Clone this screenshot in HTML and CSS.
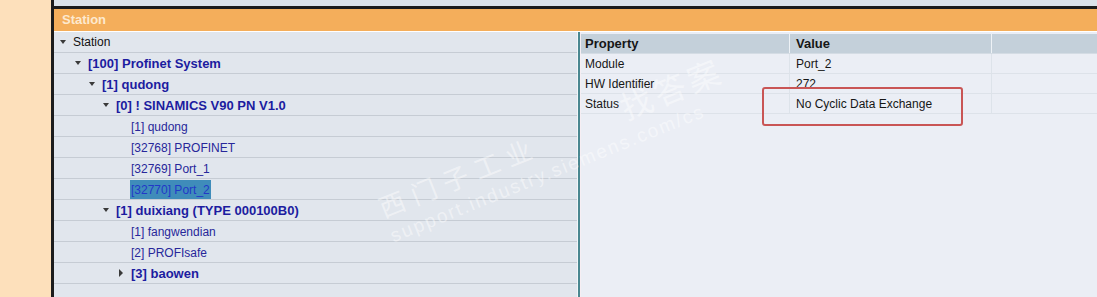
FILE: index.html
```html
<!DOCTYPE html>
<html>
<head>
    <title>Station</title>
    <link rel="stylesheet" href="styles.css">
</head>
<body>
    <div class="page">
        <div class="side"></div>
        <div class="main">
            <div class="topstrip"></div>
            <div class="title">Station</div>
            <div class="content">
                <div class="tree">
                    <div class="row lvl0"><span class="arrow down"></span><span class="plain">Station</span></div>
                    <div class="row lvl1"><span class="arrow down"></span><b>[100] Profinet System</b></div>
                    <div class="row lvl2"><span class="arrow down"></span><b>[1] qudong</b></div>
                    <div class="row lvl3"><span class="arrow down"></span><b>[0] ! SINAMICS V90 PN V1.0</b></div>
                    <div class="row lvl4"><span class="item">[1] qudong</span></div>
                    <div class="row lvl4"><span class="item">[32768] PROFINET</span></div>
                    <div class="row lvl4"><span class="item">[32769] Port_1</span></div>
                    <div class="row lvl4"><span class="item selected">[32770] Port_2</span></div>
                    <div class="row lvl3"><span class="arrow down"></span><b>[1] duixiang (TYPE 000100B0)</b></div>
                    <div class="row lvl4"><span class="item">[1] fangwendian</span></div>
                    <div class="row lvl4"><span class="item">[2] PROFIsafe</span></div>
                    <div class="row lvl4 closed"><span class="arrow right"></span><b>[3] baowen</b></div>
                </div>
                <div class="splitter"></div>
                <div class="props">
                    <div class="prow head"><div class="c1">Property</div><div class="c2">Value</div><div class="c3"></div></div>
                    <div class="prow"><div class="c1">Module</div><div class="c2">Port_2</div><div class="c3"></div></div>
                    <div class="prow"><div class="c1">HW Identifier</div><div class="c2">272</div><div class="c3"></div></div>
                    <div class="prow"><div class="c1">Status</div><div class="c2">No Cyclic Data Exchange</div><div class="c3"></div></div>
                    <div class="mark"></div>
                </div>
                <div class="watermark">
                    <div class="wm1">西门子工业 &nbsp; &nbsp; &nbsp;<span class="wm-big">找答案</span></div>
                    <div class="wm2">support.industry.siemens.com/cs</div>
                </div>
            </div>
        </div>
    </div>
</body>
</html>
```

FILE: styles.css
```css
body {
    margin: 0;
    font-family: Tahoma, "Liberation Sans", Arial, sans-serif;
    font-size: 12px;
    background-color: #ebeef5;
    overflow: hidden;
}
.page {
    display: flex;
    height: 297px;
}
.side {
    width: 51px;
    background-color: #fde0bb;
    border-right: 3px solid #1c1c1c;
    flex-shrink: 0;
}
.main {
    flex: 1;
    display: flex;
    flex-direction: column;
}
.topstrip {
    height: 6px;
    background-color: #dce3ea;
    border-bottom: 3px solid #1c1c1c;
}
.title {
    height: 22px;
    line-height: 22px;
    background-color: #f4ae5b;
    border-bottom: 1px solid #ffffff;
    color: #fde9cf;
    font-weight: bold;
    font-size: 13px;
    padding-left: 8px;
}
.content {
    flex: 1;
    display: flex;
    position: relative;
    overflow: hidden;
}
.tree {
    width: 523px;
    background-color: #e1e6ed;
    flex-shrink: 0;
}
.row {
    height: 20px;
    border-bottom: 1px solid #c6ccd4;
    display: flex;
    align-items: center;
    color: #1d1d9c;
    white-space: nowrap;
}
.row b {
    font-weight: bold;
    font-size: 13px;
    color: #1c1ca0;
}
.plain {
    color: #111111;
}
.lvl0 { padding-left: 6px; }
.lvl1 { padding-left: 21px; }
.lvl2 { padding-left: 35px; }
.lvl3 { padding-left: 49px; }
.lvl4 { padding-left: 76px; }
.lvl4.closed { padding-left: 65px; }
.arrow {
    width: 0;
    height: 0;
    margin-right: 7px;
}
.arrow.down {
    border-left: 3.5px solid transparent;
    border-right: 3.5px solid transparent;
    border-top: 4px solid #3a3a3a;
}
.arrow.right {
    border-top: 4px solid transparent;
    border-bottom: 4px solid transparent;
    border-left: 4px solid #3a3a3a;
    margin-right: 8px;
}
.item {
    padding: 3px 1px 2px 1px;
    color: #27279a;
}
.item.selected {
    background-color: #3f8cba;
    color: #2238c8;
}
.splitter {
    width: 2px;
    flex-shrink: 0;
    background-color: #4a8790;
    border-left: 1px solid #f2f6f8;
    border-right: 1px solid #f6eef3;
}
.props {
    flex: 1;
    position: relative;
    padding-top: 2px;
}
.prow {
    display: flex;
    height: 19px;
    line-height: 20px;
    border-bottom: 1px solid #dde2e9;
    color: #161616;
}
.prow.head {
    background-color: #c4d0da;
    font-weight: bold;
    font-size: 13px;
    border-bottom: 1px solid #d4dce4;
}
.c1 {
    width: 204px;
    padding-left: 4px;
    border-right: 1px solid #dde3ea;
}
.c2 {
    width: 195px;
    padding-left: 6px;
    border-right: 1px solid #dde3ea;
}
.prow.head .c1,
.prow.head .c2 {
    border-right-color: #eef2f6;
}
.c3 {
    flex: 1;
}
.mark {
    position: absolute;
    left: 181px;
    top: 55px;
    width: 197px;
    height: 35px;
    border: 2px solid #c95555;
    border-radius: 3px;
}
.watermark {
    position: absolute;
    left: 316px;
    top: 152px;
    transform: rotate(-22deg);
    transform-origin: left top;
    color: rgba(255, 255, 255, 0.45);
    pointer-events: none;
    white-space: nowrap;
    font-family: "Liberation Sans", Arial, "Noto Sans CJK SC", sans-serif;
}
.wm1 {
    font-size: 26px;
    letter-spacing: 8px;
}
.wm-big {
    font-size: 32px;
    letter-spacing: 4px;
}
.wm2 {
    font-size: 19px;
    letter-spacing: 2px;
}
```
